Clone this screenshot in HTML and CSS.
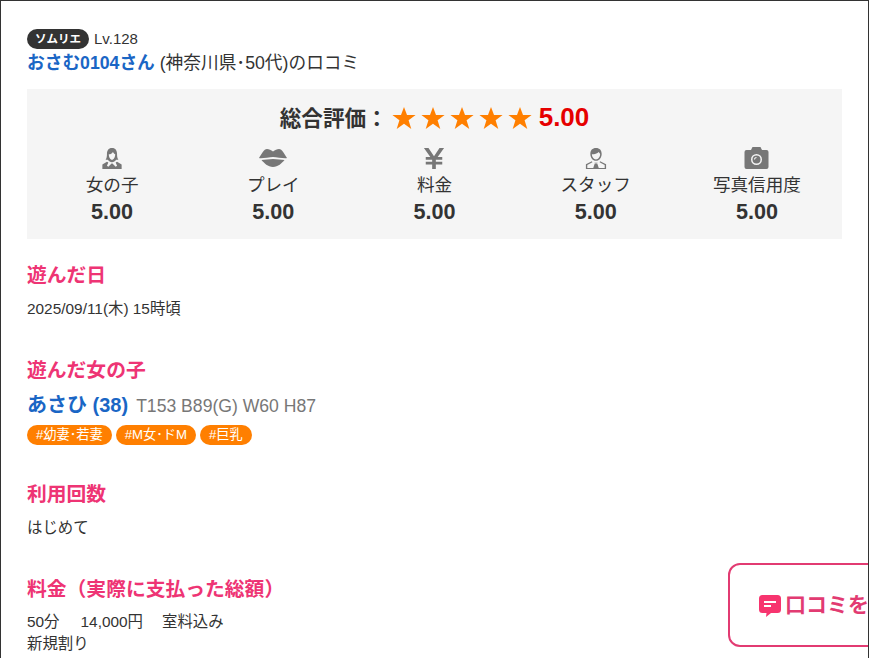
FILE: index.html
```html
<!DOCTYPE html>
<html lang="ja">
<head>
<meta charset="utf-8">
<title>口コミ</title>
<link rel="stylesheet" href="styles.css">
</head>
<body>
<div class="frame">
  <div class="reviewer">
    <div class="rank"><span class="badge">ソムリエ</span><span class="level">Lv.128</span></div>
    <div class="who"><span class="name">おさむ0104さん</span> (神奈川県･50代)のロコミ</div>
  </div>
  <section class="score">
    <div class="total">
      <span class="total-label">総合評価：</span>
      <span class="stars">
        <svg class="star" viewBox="0 0 24 24"><path d="M12 1l3 8h8.600l-7 5.300 2.700 8.700-7.300-5.200-7.300 5.200 2.700-8.700-7-5.300H9z"/></svg>
        <svg class="star" viewBox="0 0 24 24"><path d="M12 1l3 8h8.600l-7 5.300 2.700 8.700-7.300-5.200-7.300 5.200 2.700-8.700-7-5.300H9z"/></svg>
        <svg class="star" viewBox="0 0 24 24"><path d="M12 1l3 8h8.600l-7 5.300 2.700 8.700-7.300-5.200-7.300 5.200 2.700-8.700-7-5.300H9z"/></svg>
        <svg class="star" viewBox="0 0 24 24"><path d="M12 1l3 8h8.600l-7 5.300 2.700 8.700-7.300-5.200-7.300 5.200 2.700-8.700-7-5.300H9z"/></svg>
        <svg class="star" viewBox="0 0 24 24"><path d="M12 1l3 8h8.600l-7 5.300 2.700 8.700-7.300-5.200-7.300 5.200 2.700-8.700-7-5.300H9z"/></svg>
      </span>
      <span class="total-value">5.00</span>
    </div>
    <div class="items">
      <div class="item">
        <svg class="icon" viewBox="0 0 24 24"><path d="M12 1c-4 0-5.500 3-5.500 6.500 0 3-.5 5-1.500 6.500h2.500c1 1.500 2.700 2.500 4.500 2.500s3.500-1 4.500-2.500H19c-1-1.500-1.500-3.500-1.500-6.500C17.500 4 16 1 12 1zm-3.500 7c2 0 3.500-1 4.500-2.500.8 1.300 1.600 2.200 2.500 2.500 0 3-1.500 6-3.500 6s-3.500-3-3.500-6z"/><path d="M6.500 16 1.500 19v5h21v-5l-5-3-1.500.8 1.500 3.700-1.500 1-3.500-3.500H11.500L8 21.500l-1.500-1L8 16.800z"/></svg>
        <span class="item-label">女の子</span><span class="item-value">5.00</span>
      </div>
      <div class="item">
        <svg class="icon icon-lips" viewBox="0 0 28 20"><path d="M8 1c2 0 4 1 6 2.500C16 2 18 1 20 1c3 0 5.500 5 8 9-2 1-10-1-14-1S2 11 0 10C2.500 6 5 1 8 1z"/><path d="M2.500 12c3 0 7.500-1 11.500-1s8.500 1 11.500 1C23 15 19 19 14 19S5 15 2.500 12z"/></svg>
        <span class="item-label">プレイ</span><span class="item-value">5.00</span>
      </div>
      <div class="item">
        <svg class="icon" viewBox="0 0 24 24"><path d="M1 1h5l6 9 6-9h5l-7 10h5v3h-7v2h7v3h-7v5h-4v-5H3v-3h7v-2H3v-3h5z"/></svg>
        <span class="item-label">料金</span><span class="item-value">5.00</span>
      </div>
      <div class="item">
        <svg class="icon" viewBox="0 0 24 24"><path d="M12 1C8 1 5.800 3.500 5.800 7.500c0 4 2.700 7.500 6.200 7.500s6.200-3.500 6.200-7.500C18.200 3.500 16 1 12 1zM7.500 8c3 0 6-1 7.500-2.500.8 1 1.500 1.800 1.500 2.500 0 3-2 5.500-4.500 5.500S7.500 11 7.500 8z"/><path d="M7.500 15.500 1 18.800V24h22v-5.200l-6.500-3.300-.6 1 5.600 3v3.500H15l-1.600-5h-2.800l-1.600 5H2.500v-3.500l5.600-3zM10.500 16.500l1.500 1 1.500-1-.7 2h-1.600z"/></svg>
        <span class="item-label">スタッフ</span><span class="item-value">5.00</span>
      </div>
      <div class="item">
        <svg class="icon icon-camera" viewBox="0 0 24 22"><path fill-rule="evenodd" d="M8 0h8l1.500 3H22a2 2 0 0 1 2 2v15a2 2 0 0 1-2 2H2a2 2 0 0 1-2-2V5a2 2 0 0 1 2-2h4.500zM12 7a5.500 5.500 0 1 0 0 11 5.500 5.500 0 0 0 0-11zm0 1.500a4 4 0 1 1 0 8 4 4 0 0 1 0-8zm0 1.500a2.500 2.500 0 0 0-2.500 2.500h1A1.500 1.500 0 0 1 12 11z"/></svg>
        <span class="item-label">写真信用度</span><span class="item-value">5.00</span>
      </div>
    </div>
  </section>
  <section class="block">
    <h2>遊んだ日</h2>
    <p>2025/09/11(木) 15時頃</p>
  </section>
  <section class="block girl">
    <h2>遊んだ女の子</h2>
    <div class="girl-line"><span class="girl-name">あさひ (38)</span><span class="girl-size">T153 B89(G) W60 H87</span></div>
    <div class="tags"><span class="tag">#幼妻･若妻</span><span class="tag">#M女･ドM</span><span class="tag">#巨乳</span></div>
  </section>
  <section class="block">
    <h2>利用回数</h2>
    <p>はじめて</p>
  </section>
  <section class="block fee-block">
    <h2>料金（実際に支払った総額）</h2>
    <p><span class="fee">50分</span><span class="fee">14,000円</span><span>室料込み</span><br>新規割り</p>
  </section>
  <div class="cta">
    <svg class="cta-icon" viewBox="0 0 22 22"><path fill-rule="evenodd" d="M3.500 0h15A3.500 3.500 0 0 1 22 3.500v11a3.500 3.500 0 0 1-3.500 3.500H12l-5 4 .5-4H3.500A3.500 3.500 0 0 1 0 14.500v-11A3.500 3.500 0 0 1 3.500 0zM5 6v2h12V6zm0 4v2h7v-2z"/></svg>
    <span class="cta-text">口コミを投稿</span>
  </div>
</div>
</body>
</html>
```
FILE: styles.css
```css
html, body {
  margin: 0;
  padding: 0;
  background: #fff;
  overflow: hidden;
}
body {
  height: 658px;
  font-family: "Liberation Sans", "Noto Sans CJK JP", sans-serif;
  color: #333;
}
.frame {
  position: relative;
  box-sizing: border-box;
  width: 869px;
  height: 658px;
  overflow: hidden;
  border-top: 1px solid #333;
  border-left: 1px solid #333;
  border-right: 1px solid #333;
  padding: 27px 26px 0 26px;
}
.reviewer { height: 61px; }
.rank {
  display: flex;
  align-items: center;
  height: 21px;
}
.badge {
  display: block;
  width: 62px;
  height: 20px;
  border-radius: 10px;
  background: #333;
  color: #fff;
  font-size: 11.500px;
  font-weight: 700;
  line-height: 20px;
  text-align: center;
}
.level {
  margin-left: 5px;
  font-size: 15px;
  line-height: 20px;
}
.who {
  margin-top: 2px;
  font-size: 17.700px;
  line-height: 24px;
  white-space: nowrap;
}
.name {
  color: #1a66c5;
  font-weight: 700;
}
.score {
  height: 150px;
  background: #f5f5f5;
}
.total {
  display: flex;
  justify-content: center;
  align-items: center;
  height: 57px;
}
.total-label {
  font-size: 21.600px;
  font-weight: 700;
  margin: -2px 4px 0 0;
}
.stars { display: flex; gap: 5px; }
.star {
  display: block;
  width: 24px;
  height: 24px;
  fill: #ff7f00;
}
.total-value {
  margin-left: 7px;
  color: #e60000;
  font-size: 26px;
  font-weight: 700;
}
.items {
  display: grid;
  grid-template-columns: repeat(5, 1fr);
  padding: 0 4.500px;
}
.item {
  display: flex;
  flex-direction: column;
  align-items: center;
}
.icon {
  display: block;
  width: 22px;
  height: 22px;
  margin: 1px 0;
  fill: #777;
}
.icon-lips { width: 28px; height: 20px; margin: 2px 0; }
.icon-camera { width: 25px; }
.item-label {
  margin-top: 2px;
  font-size: 17.600px;
  line-height: 26px;
}
.item-value {
  margin-top: 1px;
  font-size: 21.600px;
  font-weight: 700;
  line-height: 26px;
}
.block { height: 95px; padding-top: 24px; box-sizing: border-box; }
.block h2 {
  margin: -1px 0 10px;
  color: #ee3474;
  font-size: 19.800px;
  font-weight: 700;
  line-height: 26px;
}
.block p {
  margin: 0;
  font-size: 15.400px;
  line-height: 22px;
}
.fee-block p { margin-top: -1px; }
.girl { height: 124px; }
.girl-line {
  display: flex;
  align-items: baseline;
  margin-top: -2px;
}
.girl-name {
  color: #1a66c5;
  font-size: 20px;
  font-weight: 700;
  line-height: 28px;
}
.girl-size {
  margin-left: 8px;
  color: #777;
  font-size: 17.600px;
}
.tags {
  display: flex;
  gap: 4px;
  margin-top: 6px;
}
.tag {
  height: 20px;
  padding: 0 9px;
  border-radius: 10px;
  background: #ff7f00;
  color: #fff;
  font-size: 13.200px;
  line-height: 20px;
  white-space: nowrap;
}
.fee { margin-right: 21px; }
.fee + .fee { margin-right: 19px; }
.cta {
  position: absolute;
  left: 727px;
  top: 562px;
  box-sizing: border-box;
  width: 200px;
  height: 84px;
  display: flex;
  align-items: center;
  padding-left: 29px;
  background: #fff;
  border: 2px solid #e23b72;
  border-radius: 12px;
}
.cta-icon {
  flex: none;
  width: 22px;
  height: 22px;
  margin-top: 1px;
  fill: #f7346f;
}
.cta-text {
  margin-left: 4px;
  margin-top: -5px;
  color: #e23b72;
  font-size: 21px;
  font-weight: 700;
  white-space: nowrap;
}
```
